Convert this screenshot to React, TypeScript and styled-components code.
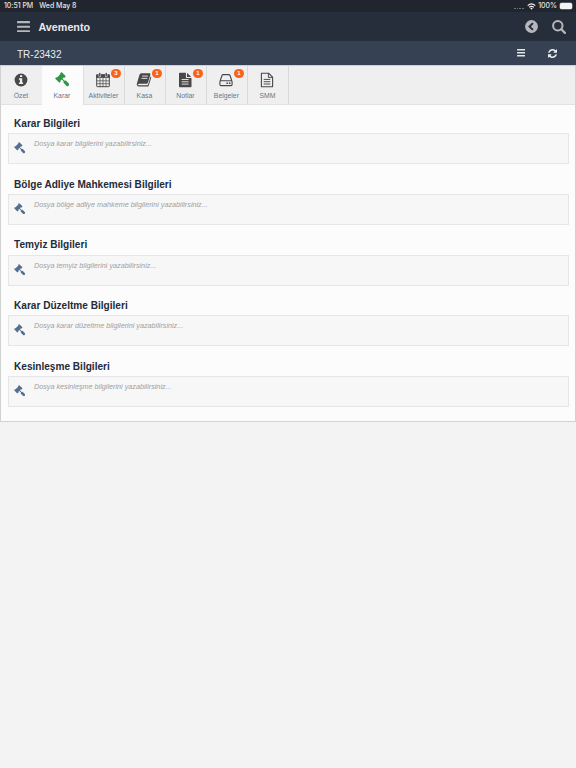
import React from 'react';
import styled, { createGlobalStyle } from 'styled-components';

const GlobalStyle = createGlobalStyle`
  * { box-sizing: border-box; }
  body { margin: 0; background: #f3f3f3; font-family: "Liberation Sans", Arial, sans-serif; }
`;

const Page = styled.div`
  width: 576px;
  height: 768px;
  overflow: hidden;
  background: #f3f3f3;
`;

const StatusBar = styled.div`
  height: 12px;
  padding: 0 4px;
  display: flex;
  align-items: center;
  background: #20252e;
  color: #e4e5e7;
  font: 500 7px/12px Inter, sans-serif;
  letter-spacing: -0.04px;
`;
const StatusDate = styled.span`
  margin-left: 6px;
`;
const StatusRight = styled.div`
  margin-left: auto;
  display: flex;
  align-items: center;
  gap: 2.5px;
`;
const SignalDots = styled.span`
  width: 10px;
  height: 1px;
  margin: 4px 0 0;
  background: repeating-linear-gradient(90deg, #6f737a 0 1.7px, transparent 1.7px 2.7px);
`;
const Battery = styled.span`
  width: 12.5px;
  height: 6px;
  border-radius: 1.5px;
  background: #f4f4f5;
  box-shadow: 0 0 0 0.5px #8c9097;
`;

const TopBar = styled.header`
  height: 29px;
  padding: 0 10px 0 17px;
  display: flex;
  align-items: center;
  background: #272e3b;
`;
const Brand = styled.h1`
  margin: 0 0 0 8.5px;
  color: #e9e9eb;
  font-size: 10.75px;
  line-height: 14px;
  font-weight: 700;
`;
const BarActions = styled.div<{ $gap: number }>`
  margin-left: auto;
  display: flex;
  align-items: center;
  gap: ${(p) => p.$gap}px;
`;

const SubBar = styled.div`
  height: 24px;
  padding: 0 19px 0 17px;
  display: flex;
  align-items: center;
  background: #364153;
  color: #eceef1;
`;
const CaseNumber = styled.span`
  font-size: 10px;
  line-height: 14px;
  padding-top: 4px;
`;

const Panel = styled.main`
  height: 357px;
  border: 1px solid #d2d2d2;
  border-top-color: #cfd0d2;
  background: #fcfcfc;
`;
const Tabs = styled.nav`
  height: 39px;
  display: flex;
  background: #efefef;
  border-bottom: 1px solid #e2e2e2;
`;
const Tab = styled.div<{ $active?: boolean }>`
  position: relative;
  flex: none;
  width: 41px;
  height: ${(p) => (p.$active ? 39 : 38)}px;
  padding: 4.5px 1.2px 0 0;
  display: flex;
  flex-direction: column;
  align-items: center;
  border-right: 1px solid ${(p) => (p.$active ? '#dedede' : '#d9d9d9')};
  background: ${(p) => (p.$active ? '#fcfcfc' : '#efefef')};
  color: ${(p) => (p.$active ? '#2c9942' : '#484848')};
  &:first-child { border-right: 0; }
  &:nth-child(2) { width: 42px; }
`;
const TabIcon = styled.span`
  height: 18px;
  display: flex;
  align-items: center;
`;
const TabLabel = styled.span`
  margin-top: 2px;
  color: #64788d;
  font-size: 6.85px;
  line-height: 10px;
  white-space: nowrap;
`;
const Count = styled.span`
  position: absolute;
  top: 2.7px;
  right: 2.8px;
  width: 10.4px;
  height: 9.4px;
  border-radius: 5px;
  background: #f8631b;
  color: #fff;
  font-size: 6px;
  line-height: 9.4px;
  font-weight: 700;
  text-align: center;
`;

const Sections = styled.div`
  padding: 12px 6.5px 0;
`;
const Section = styled.section`
  height: 60.67px;
`;
const Title = styled.h2`
  margin: 0;
  padding: 0 6.5px;
  height: 16.2px;
  color: #232b3a;
  font-size: 10.08px;
  line-height: 14px;
  font-weight: 700;
`;
const Note = styled.div`
  height: 31px;
  padding: 4px 5px;
  display: flex;
  border: 1px solid #e6e6e6;
  background: #f7f7f7;
  color: #53708e;
`;
const NoteIcon = styled.span`
  width: 12px;
  height: 12px;
  margin: 4px 8.5px 0 0;
  display: flex;
`;
const Placeholder = styled.span`
  color: #a1a1a1;
  font-size: 7.22px;
  line-height: 11px;
  font-style: italic;
`;

const Svg = styled.svg`
  display: block;
  flex: none;
`;

function Gavel({ size }: { size: number }) {
  return (
    <Svg width={size} height={size} viewBox="0 0 1792 1792" fill="currentColor">
      <path d="M1771 1536q0 53-37 90l-107 108q-39 37-91 37-53 0-90-37l-363-364q-38-36-38-90 0-53 43-96l-256-256-126 126q-14 14-34 14t-34-14q2 2 12.5 12t12.5 13 10 11.5 10 13.5 6 13.5 5.5 16.5 1.5 18q0 38-28 68-3 3-16.5 18t-19 20.5-18.5 16.5-22 15.5-22 9-26 4.5q-40 0-68-28l-408-408q-28-28-28-68 0-13 4.5-26t9-22 15.5-22 16.5-18.5 20.5-19 18-16.5q30-28 68-28 10 0 18 1.5t16.5 5.5 13.5 6 13.5 10 11.5 10 13 12.5 12 12.5q-14-14-14-34t14-34l348-348q14-14 34-14t34 14q-2-2-12.5-12t-12.5-13-10-11.5-10-13.5-6-13.5-5.5-16.5-1.5-18q0-38 28-68 3-3 16.5-18t19-20.5 18.5-16.5 22-15.5 22-9 26-4.5q40 0 68 28l408 408q28 28 28 68 0 13-4.5 26t-9 22-15.5 22-16.5 18.5-20.5 19-18 16.5q-30 28-68 28-10 0-18-1.5t-16.5-5.5-13.5-6-13.5-10-11.5-10-13-12.5-12-12.5q14 14 14 34t-14 34l-126 126 256 256q43-43 96-43 52 0 91 37l363 363q37 39 37 91z" />
    </Svg>
  );
}

const Bars = ({ width, height, thick, color }: { width: number; height: number; thick: number; color: string }) => (
  <Svg width={width} height={height} viewBox={`0 0 ${width} ${height}`} fill={color}>
    <rect width={width} height={thick} rx=".5" />
    <rect y={(height - thick) / 2} width={width} height={thick} rx=".5" />
    <rect y={height - thick} width={width} height={thick} rx=".5" />
  </Svg>
);

const Info = () => (
  <Svg width="18" height="18" viewBox="0 0 18 18">
    <circle cx="9" cy="9" r="6.4" fill="currentColor" />
    <path d="M8 4.2h2.2v1.9H8zM6.9 7.3h3.3v4.2h.9v1.4H6.9v-1.4h1V8.7h-1z" fill="#efefef" />
  </Svg>
);
const Calendar = () => (
  <Svg width="18" height="18" viewBox="0 0 18 18" fill="none" stroke="currentColor">
    <path d="M2.2 3.5h13.6v3.4H2.2z" fill="currentColor" stroke="none" />
    <rect x="2.7" y="3.7" width="12.6" height="12" rx=".7" />
    <path d="M3 9.8h12M3 12.7h12M6 7v8.7M9 7v8.7M12 7v8.7" strokeWidth=".7" />
    <path d="M5.8 2.8v2.2M12.2 2.8v2.2" stroke="#efefef" strokeWidth="2.5" strokeLinecap="round" />
    <path d="M5.8 2.4v2.5M12.2 2.4v2.5" strokeWidth="1.5" strokeLinecap="round" />
  </Svg>
);
const Book = () => (
  <Svg width="18" height="18" viewBox="0 0 18 18">
    <path d="M6.3 2.3h8.2q1.2 0 .9 1.2l-2.5 8.3q-.3 1-1.4 1H3.8q-.8 0-.8.7 0 .8 1 .8h8q.8 0 1.1-.8l2.4-8q.9.4.6 1.4l-2.3 7.500q-.4 1.200-1.700 1.200H4q-1.500 0-2.100-1.500-.3-.8 0-1.600l2.500-8.600q.5-1.600 1.900-1.600z" fill="currentColor" />
    <path d="M7.2 5.1h5.8M6.5 7.4h5.8" stroke="#efefef" strokeWidth=".9" />
  </Svg>
);
const FileSolid = () => (
  <Svg width="18" height="18" viewBox="0 0 18 18" fill="currentColor">
    <path d="M3.8 1.8h6.1v4.4q0 .8.8.8h4.8v8.4q0 .8-.8.8H3.8q-.8 0-.8-.8V2.6q0-.8.8-.8z" />
    <path d="M11 1.9q.4.2.7.5l3 3q.3.3.5.6H11z" />
    <path d="M5.6 8.5h7M5.6 10.8h7M5.6 13.1h7" stroke="#efefef" strokeWidth=".9" />
  </Svg>
);
const FileOutline = () => (
  <Svg width="18" height="18" viewBox="0 0 18 18" fill="none" stroke="currentColor">
    <path d="M3.4 2.2h7.2l4 4v9.5H3.4z" strokeWidth="1.1" strokeLinejoin="round" />
    <path d="M10.4 2.2v4.2h4.2M5.7 8.4h6.6M5.7 10.7h6.6M5.7 13h6.6" strokeWidth=".95" />
  </Svg>
);
const Drive = () => (
  <Svg width="18" height="18" viewBox="0 0 18 18" fill="none" stroke="currentColor" strokeWidth="1.1">
    <path d="M3.1 10 5 4.5q.3-.9 1.2-.9h5.6q.9 0 1.2.9L14.9 10M3.900 9.700h10.200q1 0 1 1v2.900q0 1-1 1H3.900q-1 0-1-1v-2.900q0-1 1-1z" />
    <circle cx="10.2" cy="12.2" r=".85" fill="currentColor" stroke="none" />
    <circle cx="12.7" cy="12.2" r=".85" fill="currentColor" stroke="none" />
  </Svg>
);
const Back = () => (
  <Svg width="13" height="13" viewBox="0 0 13 13">
    <circle cx="6.5" cy="6.5" r="6.4" fill="#b5b7bb" />
    <path d="M7.9 3.1 4.5 6.5l3.4 3.4" fill="none" stroke="#272e3b" strokeWidth="2" />
  </Svg>
);
const Search = () => (
  <Svg width="14" height="14" viewBox="0 0 14 14" fill="none" stroke="#b5b7bb" strokeWidth="2">
    <circle cx="5.8" cy="5.8" r="4.7" />
    <path d="m9.3 9.3 3.6 3.6" strokeWidth="2.2" strokeLinecap="round" />
  </Svg>
);
const Refresh = () => (
  <Svg width="9" height="9" viewBox="0 128 1536 1536" fill="currentColor">
    <path d="M1511 1056q0 5-1 7-64 268-268 434.5t-478 166.5q-146 0-282.5-55t-243.5-157l-129 129q-19 19-45 19t-45-19-19-45v-448q0-26 19-45t45-19h448q26 0 45 19t19 45-19 45l-137 137q71 66 161 102t187 36q134 0 250-65t186-179q11-17 53-117 8-23 30-23h192q13 0 22.5 9.5t9.5 22.5zm25-800v448q0 26-19 45t-45 19h-448q-26 0-45-19t-19-45 19-45l138-138q-148-137-349-137-134 0-250 65t-186 179q-11 17-53 117-8 23-30 23h-199q-13 0-22.5-9.5t-9.5-22.5v-7q65-268 270-434.5t480-166.5q146 0 284 55.5t245 156.5l130-129q19-19 45-19t45 19 19 45z" />
  </Svg>
);
const Wifi = () => (
  <Svg width="9" height="7" viewBox="0 0 9 7" fill="none" stroke="#eee" strokeWidth="1.15">
    <path d="M.7 2.6Q4.5-.8 8.3 2.6M2.2 4.3q2.3-2 4.6 0" />
    <path d="m3.2 5.3 1.3 1.4 1.3-1.4q-1.3-1-2.6 0z" fill="#eee" stroke="none" />
  </Svg>
);

const tabs = [
  { label: 'Özet', icon: <Info /> },
  { label: 'Karar', icon: <Gavel size={14.5} />, active: true },
  { label: 'Aktiviteler', icon: <Calendar />, count: 3 },
  { label: 'Kasa', icon: <Book />, count: 1 },
  { label: 'Notlar', icon: <FileSolid />, count: 1 },
  { label: 'Belgeler', icon: <Drive />, count: 1 },
  { label: 'SMM', icon: <FileOutline /> },
];

const sections = [
  ['Karar Bilgileri', 'Dosya karar bilgilerini yazabilirsiniz...'],
  ['Bölge Adliye Mahkemesi Bilgileri', 'Dosya bölge adliye mahkeme bilgilerini yazabilirsiniz...'],
  ['Temyiz Bilgileri', 'Dosya temyiz bilgilerini yazabilirsiniz...'],
  ['Karar Düzeltme Bilgileri', 'Dosya karar düzeltme bilgilerini yazabilirsiniz...'],
  ['Kesinleşme Bilgileri', 'Dosya kesinleşme bilgilerini yazabilirsiniz...'],
];

export default function App() {
  return (
    <Page>
      <GlobalStyle />
      <StatusBar>
        <span>10:51 PM</span>
        <StatusDate>Wed May 8</StatusDate>
        <StatusRight>
          <SignalDots />
          <Wifi />
          <span>100%</span>
          <Battery />
        </StatusRight>
      </StatusBar>
      <TopBar>
        <Bars width={13} height={11.5} thick={2.2} color="#b5b7bb" />
        <Brand>Avemento</Brand>
        <BarActions $gap={14}>
          <Back />
          <Search />
        </BarActions>
      </TopBar>
      <SubBar>
        <CaseNumber>TR-23432</CaseNumber>
        <BarActions $gap={23}>
          <Bars width={8.5} height={7.5} thick={1.5} color="#e4e6e9" />
          <Refresh />
        </BarActions>
      </SubBar>
      <Panel>
        <Tabs>
          {tabs.map((tab) => (
            <Tab key={tab.label} $active={tab.active}>
              <TabIcon>{tab.icon}</TabIcon>
              <TabLabel>{tab.label}</TabLabel>
              {tab.count && <Count>{tab.count}</Count>}
            </Tab>
          ))}
        </Tabs>
        <Sections>
          {sections.map(([title, hint]) => (
            <Section key={title}>
              <Title>{title}</Title>
              <Note>
                <NoteIcon><Gavel size={11.5} /></NoteIcon>
                <Placeholder>{hint}</Placeholder>
              </Note>
            </Section>
          ))}
        </Sections>
      </Panel>
    </Page>
  );
}
